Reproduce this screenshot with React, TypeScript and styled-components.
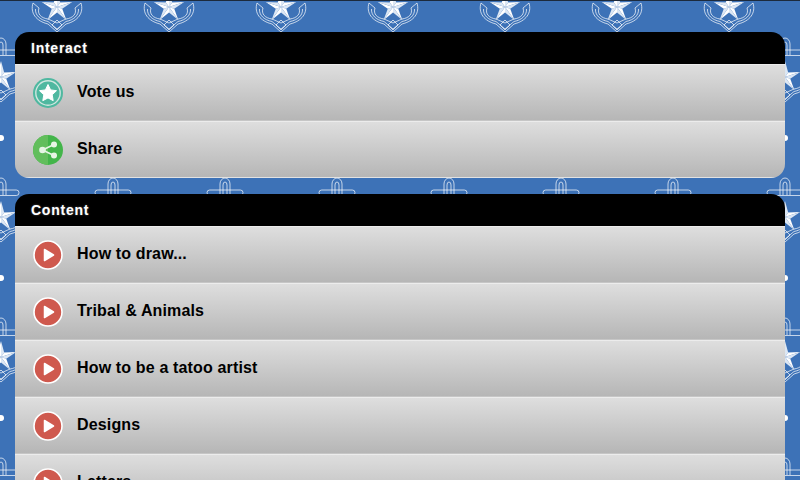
import React from "react";
import styled, { createGlobalStyle } from "styled-components";

// anchor + nautical star, drawn around 0,0 (star centre)
const starPoint = (angle: number, r: number) => {
  const a = ((angle - 90) * Math.PI) / 180;
  return `${(Math.cos(a) * r).toFixed(1)} ${(Math.sin(a) * r).toFixed(1)}`;
};

const facets = [0, 72, 144, 216, 288]
  .map((a) => {
    const tip = starPoint(a, 16);
    const left = starPoint(a - 36, 5.5);
    const right = starPoint(a + 36, 5.5);
    return `<path d="M0 0L${left}L${tip}Z" fill="#fff"/><path d="M0 0L${tip}L${right}Z" fill="#dce7f4"/>`;
  })
  .join("");

const anchor = `
<g fill="none" stroke="#fff" stroke-opacity=".7" stroke-width="1">
  <path d="M-5 -22V-33a5 6 0 0 1 10 0V-22"/>
  <path d="M-2 -22V-32a2 3 0 0 1 4 0V-22"/>
  <rect x="-18" y="-27" width="36" height="5.5" rx="2.7"/>
  <path d="M-24 -4C-27 6 -21 14 -9 17L0 25L9 17C21 14 27 6 24 -4L18 1C20 7 16 11 9 12L0 16L-9 12C-16 11 -20 7 -18 1Z"/>
  <path d="M-21.5 2C-22 8 -17 13 -9 14.5L0 22L9 14.5C17 13 22 8 21.5 2"/>
  <path d="M-5 18L0 13L5 18L0 23Z"/>
</g>
${facets}`;

const placed = (x: number, y: number) =>
  `<g transform="translate(${x} ${y})">${anchor}</g>`;

const dot = (x: number, y: number) =>
  `<circle cx="${x}" cy="${y}" r="3" fill="#fff"/>`;

const tile = `<svg xmlns="http://www.w3.org/2000/svg" width="112" height="140">
${placed(1, 77)}${placed(113, 77)}${placed(57, 7)}${placed(57, 147)}
${dot(1, 138)}${dot(113, 138)}${dot(1, -2)}${dot(113, -2)}${dot(57, 68)}
</svg>`;

const GlobalStyle = createGlobalStyle`
  html, body {
    margin: 0;
    height: 100%;
    overflow: hidden;
  }
  body {
    font-family: "Liberation Sans", Arial, sans-serif;
  }
`;

const Page = styled.div`
  height: 480px;
  overflow: hidden;
  box-sizing: border-box;
  padding: 32px 15px 0;
  display: flex;
  flex-direction: column;
  gap: 16px;
  background-color: #3d72b7;
  background-image: url("data:image/svg+xml,${encodeURIComponent(tile)}");
  box-shadow: inset 0 1px 0 #1c2a3c;
`;

const Panel = styled.section`
  flex-shrink: 0;
  border-radius: 14px;
  overflow: hidden;
`;

const PanelTitle = styled.h2`
  margin: 0;
  height: 32px;
  box-sizing: border-box;
  padding-left: 16px;
  background: #000;
  color: #fff;
  font-size: 14px;
  line-height: 32px;
  font-weight: bold;
  letter-spacing: 0.75px;
  text-shadow: 0 0 2px rgba(255, 255, 255, 0.4);
`;

const Row = styled.div`
  height: 57px;
  box-sizing: border-box;
  display: flex;
  align-items: center;
  gap: 14px;
  padding-left: 18px;
  border-top: 1px solid #ececec;
  border-bottom: 1px solid #c6c6c6;
  background: linear-gradient(#dedede, #b6b6b6);

  &:last-child {
    border-bottom-color: #e2e2e2;
  }
`;

const RowLabel = styled.span`
  color: #000;
  font-size: 16px;
  line-height: 18px;
  margin-bottom: 2px;
  font-weight: bold;
  letter-spacing: 0.15px;
`;

const IconSvg = styled.svg`
  flex-shrink: 0;
  display: block;
`;

function VoteIcon() {
  return (
    <IconSvg width="30" height="30" viewBox="0 0 30 30">
      <circle cx="15" cy="15" r="15" fill="#4fb8a0" />
      <circle cx="15" cy="15" r="12.2" fill="none" stroke="#cfe6df" strokeWidth="1.4" />
      <path
        d="M15 6.5l2.6 5.4 5.9.8-4.3 4.1 1 5.9-5.2-2.8-5.2 2.8 1-5.9-4.3-4.1 5.9-.8z"
        fill="#fff"
        stroke="#fff"
        strokeLinejoin="round"
      />
    </IconSvg>
  );
}

function ShareIcon() {
  return (
    <IconSvg width="30" height="30" viewBox="0 0 30 30">
      <circle cx="15" cy="15" r="15" fill="#43b54a" />
      <path d="M15 0a15 15 0 0 0 0 30z" fill="#62be5c" />
      <path d="M21 9.5L9.5 15L21 20.5" fill="none" stroke="#e6f5e4" strokeWidth="1.6" />
      <circle cx="21" cy="9.5" r="3" fill="#e6f5e4" />
      <circle cx="9.5" cy="15" r="3.3" fill="#e6f5e4" />
      <circle cx="21" cy="20.5" r="3" fill="#e6f5e4" />
    </IconSvg>
  );
}

function PlayIcon() {
  return (
    <IconSvg width="30" height="30" viewBox="0 0 30 30">
      <circle cx="15" cy="15" r="14" fill="#cf594e" stroke="#fff" strokeWidth="1.6" />
      <path
        d="M11.5 9.5L20.5 15L11.5 20.5z"
        fill="#fff"
        stroke="#fff"
        strokeWidth="1.5"
        strokeLinejoin="round"
      />
    </IconSvg>
  );
}

const contentItems = [
  "How to draw...",
  "Tribal & Animals",
  "How to be a tatoo artist",
  "Designs",
  "Letters",
];

export default function App() {
  return (
    <Page>
      <GlobalStyle />
      <Panel>
        <PanelTitle>Interact</PanelTitle>
        <Row>
          <VoteIcon />
          <RowLabel>Vote us</RowLabel>
        </Row>
        <Row>
          <ShareIcon />
          <RowLabel>Share</RowLabel>
        </Row>
      </Panel>
      <Panel>
        <PanelTitle>Content</PanelTitle>
        {contentItems.map((item) => (
          <Row key={item}>
            <PlayIcon />
            <RowLabel>{item}</RowLabel>
          </Row>
        ))}
      </Panel>
    </Page>
  );
}
